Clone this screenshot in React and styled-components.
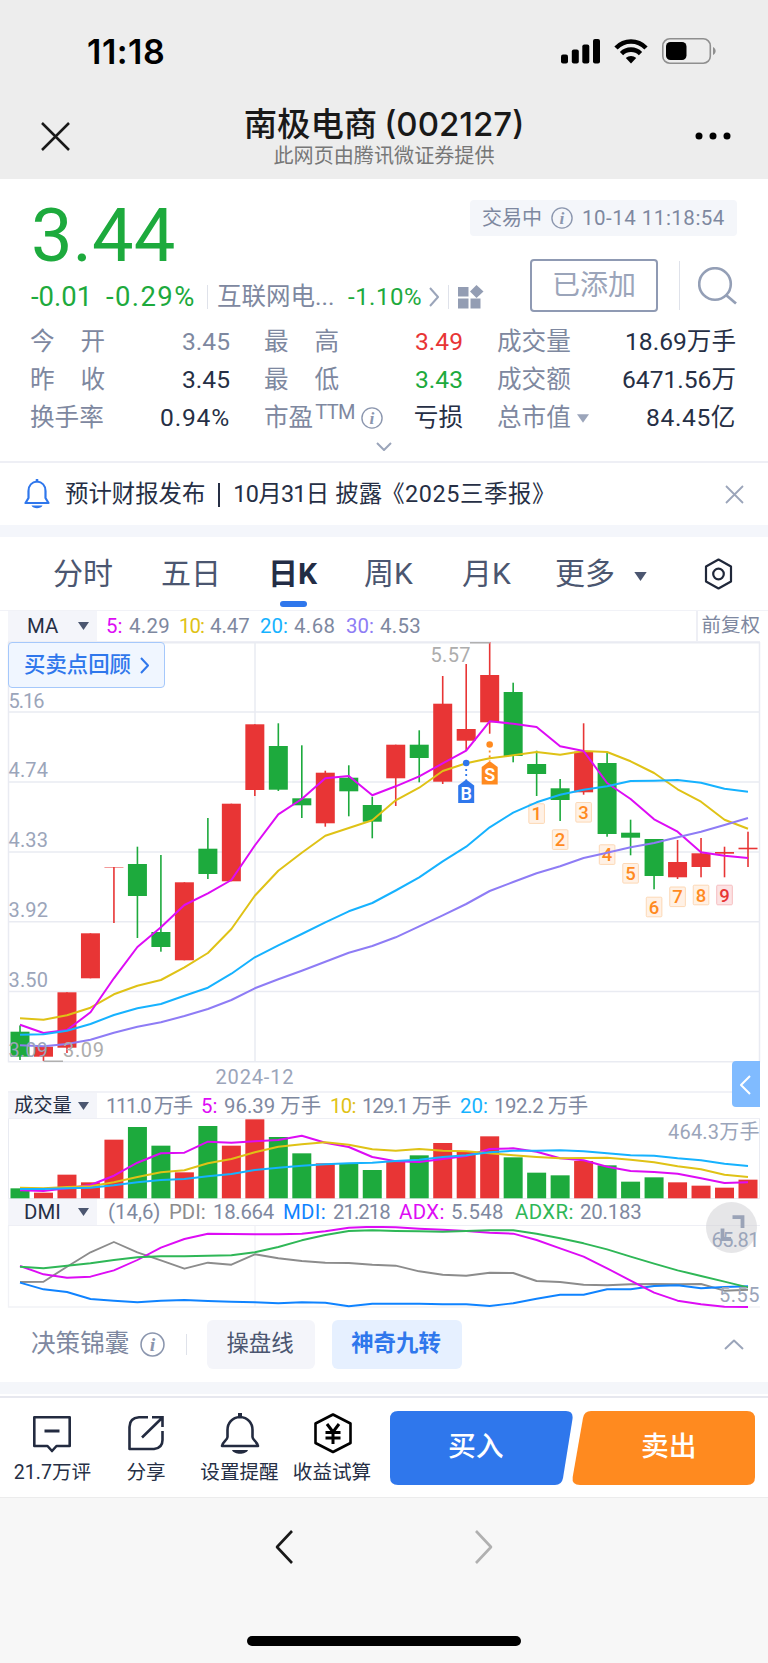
import React from 'react'
import styled, { createGlobalStyle } from 'styled-components'


const GlobalStyle = createGlobalStyle`
    * {
        box-sizing: border-box;
    }

    body {
        margin: 0;
        background: #f7f7f7;
        font-family: Roboto, "Noto Sans CJK SC", sans-serif;
        color: #262f45;
    }

    svg {
        display: block;
        flex: none;
    }
`

const RED = '#e83535'
const GREEN = '#1daa3d'
const GREY = '#7e88a0'
const PALE = '#9ba5ba'
const BLUE = '#2f77ec'
const ORANGE = '#ff8a1f'
const MAGENTA = '#dd0cf5'
const YELLOW = '#dfc216'
const CYAN = '#16b2ff'
const PURPLE = '#8e7cf5'

const Page = styled.div`
    width: 768px;
    height: 1663px;
    overflow: hidden;
    background: #fff;
`

/* ---------- header ---------- */

const Header = styled.header`
    height: 179px;
    background: #ededed;
    color: #000;
`

const StatusBar = styled.div`
    height: 102px;
    padding: 0 52px 0 87px;
    display: flex;
    align-items: center;
`

const Clock = styled.div`
    flex: 1;
    padding-top: 1px;
    font: 600 34px/40px Inter, sans-serif;
    letter-spacing: 0.5px;
`

const StatusIcons = styled.div`
    display: flex;
    align-items: center;
    gap: 14px;
`

const TitleBar = styled.div`
    height: 77px;
    padding: 0 37px 0 41px;
    display: flex;
    justify-content: space-between;
`

const TitleIcon = styled.div`
    width: 36px;
    padding-top: ${(p) => p.$top}px;
`

const TitleText = styled.div`
    text-align: center;
    padding-right: 4px;
`

const StockName = styled.h1`
    margin: 0;
    height: 42px;
    font: 500 33.4px/45px Inter, "Noto Sans CJK SC", sans-serif;
    color: #191919;
    white-space: nowrap;

    span {
        margin-left: 7px;
        font-size: 33px;
        letter-spacing: 0px;
    }
`

const Provider = styled.div`
    font-size: 20.1px;
    line-height: 24px;
    color: #777;
`

/* ---------- quote ---------- */

const Quote = styled.section`
    height: 284px;
    padding: 21px 31px 0;
    border-bottom: 2px solid #eeeff5;
`

const QuoteTop = styled.div`
    height: 115px;
    display: flex;
    justify-content: space-between;
`

const QuoteMain = styled.div`
    flex: none;
    width: 430px;
`

const Price = styled.div`
    height: 79px;
    font-size: 74px;
    line-height: 72px;
    color: ${GREEN};
`

const ChangeRow = styled.div`
    height: 34px;
    padding-top: 1px;
    display: flex;
    align-items: center;
    white-space: nowrap;
`

const Change = styled.span`
    flex: none;
    width: ${(p) => p.$w}px;
    font-size: ${(p) => p.$size || 26}px;
    letter-spacing: ${(p) => p.$track || 0}px;
    color: ${GREEN};
`

const Sector = styled.span`
    flex: none;
    width: 131px;
    font-size: 24.5px;
    line-height: 30px;
    color: ${GREY};
`

const Divider = styled.i`
    flex: none;
    width: 1px;
    height: ${(p) => p.$h || 24}px;
    margin: 0 ${(p) => p.$right || 9}px 0 ${(p) => p.$left || 0}px;
    background: #dfe2ea;
`

const QuoteSide = styled.div`
    display: flex;
    flex-direction: column;
    align-items: flex-end;
    gap: 23px;
`

const StatusPill = styled.div`
    width: 267px;
    height: 36px;
    padding: 0 12px;
    display: flex;
    align-items: center;
    gap: 9px;
    border-radius: 4px;
    background: #f4f6fa;
    color: ${GREY};
    font-size: 20px;
    line-height: 34px;
    white-space: nowrap;

    span {
        font-size: 20.5px;
        letter-spacing: 0.5px;
    }
`

const SideActions = styled.div`
    display: flex;
    align-items: center;
`

const AddedButton = styled.button`
    width: 128px;
    height: 53px;
    padding: 0;
    border: 2px solid #8f9ab3;
    border-radius: 4px;
    background: #fff;
    color: ${PALE};
    font: 28px/40px Roboto, "Noto Sans CJK SC", sans-serif;
`

const Stats = styled.div`
    padding-top: 8px;
    display: grid;
    grid-template-columns: 199px 198px 238px;
    grid-auto-rows: 38.2px;
    column-gap: 35px;
`

const Stat = styled.div`
    display: flex;
    align-items: center;
    justify-content: space-between;
    white-space: nowrap;
`

const StatLabel = styled.span`
    display: flex;
    align-items: center;
    margin-left: -1px;
    font-size: 24.6px;
    line-height: 30px;
    color: ${GREY};

    sup {
        font-size: 20px;
        line-height: 20px;
        margin: -12px 6px 0 2px;
        letter-spacing: -0.6px;
    }
`

const Spread = styled.span`
    width: 75px;
    display: flex;
    justify-content: space-between;
`

const StatValue = styled.span`
    font-size: 24.6px;
    line-height: 30px;
    letter-spacing: ${(p) => p.$track || 0}px;
    color: ${(p) => p.$color || '#262f45'};
`

const MoreStats = styled.div`
    padding-top: 4px;
    display: flex;
    justify-content: center;
`

/* ---------- notice ---------- */

const Notice = styled.section`
    height: 74px;
    padding: 0 24px 0 24px;
    display: flex;
    align-items: center;
    border-bottom: 12px solid #f4f6fb;
    font-size: 23.4px;
    line-height: 30px;
    white-space: nowrap;
`

const NoticeText = styled.div`
    flex: 1;
    display: flex;
    padding-left: 15px;

    b {
        width: 2px;
        height: 24px;
        margin: 4px 13px 0 13px;
        background: #262f45;
    }
`

const NoticeDate = styled.span`
    width: 102px;
    letter-spacing: -0.7px;
`

const NoticeReport = styled.span`
    margin-left: -1px;
    letter-spacing: 0.6px;
`

/* ---------- period tabs ---------- */

const Tabs = styled.nav`
    height: 74px;
    padding: 0 35px 0 53px;
    display: flex;
    border-bottom: 1px solid #f1f2f7;
`

const Tab = styled.div`
    width: ${(p) => p.$w}px;
    font-size: 30px;
    line-height: 74px;
    font-weight: ${(p) => (p.$active ? 700 : 400)};
    color: ${(p) => (p.$active ? '#232d45' : '#4b5670')};
    white-space: nowrap;

    &::after {
        content: '';
        display: ${(p) => (p.$active ? 'block' : 'none')};
        width: 27px;
        height: 6px;
        margin: -10px 0 0 12px;
        border-radius: 3px;
        background: ${BLUE};
    }
`

const TabCaret = styled.div`
    flex: 1;
    padding: 35px 0 0 1px;
`

const TabSetting = styled.div`
    padding-top: 21px;
`

/* ---------- charts ---------- */

const LegendRow = styled.div`
    height: ${(p) => p.$h}px;
    margin: 0 8px;
    display: flex;
    align-items: center;
    border-top: ${(p) => (p.$line ? '2px solid #f1f2f7' : 'none')};
    border-bottom: 1px solid #eeeff5;
    font-size: 20.4px;
    line-height: 24px;
    color: ${GREY};
    white-space: nowrap;
`

const LegendPicker = styled.div`
    align-self: stretch;
    width: 89px;
    padding: 0 8px 0 ${(p) => p.$left}px;
    margin-right: ${(p) => p.$gap}px;
    display: flex;
    align-items: center;
    justify-content: space-between;
    background: #f4f5fa;
    color: #262f45;
    font-size: ${(p) => p.$size || 20.4}px;
`

const LegendItem = styled.span`
    width: ${(p) => p.$w}px;
    letter-spacing: ${(p) => p.$track || 0}px;
    color: ${(p) => p.$color || GREY};
`

const Adjust = styled.div`
    align-self: stretch;
    margin-left: auto;
    padding-left: 3px;
    display: flex;
    align-items: center;
    border-left: 2px solid #eeeff5;
    font-size: 19.5px;
`

const ChartArea = styled.div`
    position: relative;
`

const ReviewButton = styled.button`
    position: absolute;
    left: 8px;
    top: 0;
    width: 157px;
    height: 46px;
    padding: 0 15px 0 15px;
    display: flex;
    align-items: center;
    justify-content: space-between;
    border: 1px solid #a5c8fb;
    border-radius: 4px;
    background: #f0f6ff;
    color: ${BLUE};
    font: 500 21.4px/30px Roboto, "Noto Sans CJK SC", sans-serif;
`

const SideHandle = styled.div`
    position: absolute;
    right: 8px;
    top: 419px;
    z-index: 2;
    width: 28px;
    height: 46px;
    padding: 14px 0 0 8px;
    border-radius: 4px 0 0 4px;
    background: #80bbff;
`

const FullscreenButton = styled.div`
    position: absolute;
    right: 11px;
    top: -24px;
    width: 51px;
    height: 51px;
    border-radius: 50%;
    background: rgba(205, 205, 210, 0.5);
`

const DmiScale = styled.svg`
    position: absolute;
    left: 0;
    top: 0;
`

/* ---------- strategy row ---------- */

const Strategy = styled.section`
    height: 86px;
    padding: 0 24px 1px 31px;
    display: flex;
    align-items: center;
    border-bottom: 12px solid #f4f6fa;
    white-space: nowrap;
`

const StrategyLabel = styled.span`
    width: 109px;
    font-size: 24.6px;
    line-height: 30px;
    padding-bottom: 2px;
    color: ${GREY};
`

const Chip = styled.div`
    width: ${(p) => p.$w}px;
    height: 49px;
    margin-right: 17px;
    border-radius: 6px;
    padding-right: 2px;
    text-align: center;
    font-size: 22.4px;
    line-height: 46px;
    font-weight: ${(p) => (p.$active ? 700 : 400)};
    color: ${(p) => (p.$active ? BLUE : '#4b5670')};
    background: ${(p) => (p.$active ? '#e6f0ff' : '#f4f5fa')};
`

const Grow = styled.div`
    flex: 1;
`

/* ---------- bottom bar ---------- */

const ActionBar = styled.footer`
    height: 102px;
    margin-top: 2px;
    padding: 13px 13px 0 7px;
    display: flex;
    border-top: 2px solid #e7e8ef;
    border-bottom: 1px solid #ececec;
`

const Action = styled.div`
    width: ${(p) => p.$w}px;
    display: flex;
    flex-direction: column;
    align-items: center;
    gap: 5px;
    font-size: 19.6px;
    line-height: 26px;
    white-space: nowrap;
`

const TradeButtons = styled.div`
    width: 365px;
    height: 74px;
    margin-left: auto;
    display: grid;
    grid-template: 74px / 178px 187px;
`

const TradeShape = styled.svg`
    grid-area: 1 / 1 / 2 / 3;
`

const TradeLabel = styled.span`
    grid-row: 1;
    grid-column: ${(p) => p.$col};
    z-index: 1;
    padding-left: ${(p) => p.$left}px;
    font-size: 27.8px;
    line-height: 72px;
    font-weight: 500;
    color: #fff;
`

const BrowserNav = styled.div`
    height: 166px;
    padding-top: 32px;
    display: flex;
    flex-direction: column;
    align-items: center;
    justify-content: space-between;
    background: #f7f7f7;
`

const NavButtons = styled.div`
    display: flex;
    gap: 180px;
`

const HomeBar = styled.div`
    width: 274px;
    height: 10px;
    margin-bottom: 18px;
    border-radius: 5px;
    background: #000;
`

/* ---------- data ---------- */

// color, body top, body bottom, high, low
const candles = [
    ['g', 1031.7, 1056.7, 1025.5, 1060],
    ['r', 1046.7, 1056.7, 1046, 1061],
    ['r', 992.3, 1047.7, 992.3, 1053],
    ['r', 933.3, 978.3, 933.3, 978.3],
    ['r', 867, 868, 867, 923],
    ['g', 864, 896, 846.7, 938],
    ['g', 932, 947, 855, 951.7],
    ['r', 882.3, 960.3, 882.3, 960.3],
    ['g', 848.7, 874, 818, 879],
    ['r', 803.7, 881.3, 803.7, 881.3],
    ['r', 724.3, 790, 724.3, 796],
    ['g', 746, 789.7, 723.3, 791],
    ['g', 798.3, 805.3, 745.3, 818],
    ['r', 772.7, 823.3, 770.7, 826.7],
    ['g', 777.7, 791.3, 765.3, 816.3],
    ['g', 805, 821.7, 796.7, 838.3],
    ['r', 744.7, 778.3, 744.7, 806],
    ['g', 744.7, 758, 730.3, 782.3],
    ['r', 703.7, 781.7, 676, 784],
    ['r', 729, 740.7, 664, 750.7],
    ['r', 675, 722.3, 642, 733.7],
    ['g', 692, 756, 682.7, 762.3],
    ['g', 764, 774, 750.7, 796],
    ['g', 788.3, 800, 779, 821],
    ['r', 751.7, 792.3, 723.3, 794.7],
    ['g', 763, 834, 753, 836.7],
    ['g', 832.7, 837.7, 819.7, 855.3],
    ['g', 839, 876, 839, 889.3],
    ['r', 862, 877.3, 840, 879],
    ['r', 853.3, 867, 838, 877.3],
    ['r', 852, 853.7, 846.7, 877.3],
    ['r', 847.7, 849.3, 831.7, 867],
]

const ma = [
    { color: YELLOW, points: [1018.3, 1019.7, 1015.3, 1007.7, 994.3, 985.7, 980, 967.3, 953, 929, 895.7, 870.7, 852.7, 835.7, 828, 820.3, 800.3, 787.7, 771, 763.3, 758.3, 755.3, 752, 754.7, 751, 752, 761.3, 773, 789.3, 801.7, 819.7, 828.7] },
    { color: MAGENTA, points: [1024.7, 1033, 1030, 1012.3, 978.3, 947, 927.3, 905, 893.3, 880, 845.5, 814.3, 799, 778.3, 776, 795.3, 786.3, 776.3, 763.3, 750.7, 721.3, 723.7, 727, 746.3, 751, 783, 799, 819.3, 831.7, 852.3, 855.7, 858] },
    { color: CYAN, points: [1034.7, 1034.3, 1030.7, 1024, 1015, 1008.3, 1004, 995.7, 987.7, 973.7, 957.3, 945.3, 934, 922.3, 911.3, 903, 890.5, 877.3, 861.3, 846.7, 827.3, 812.7, 802.3, 794.7, 789.7, 786.3, 781, 780.7, 780, 782.7, 788.7, 791.7] },
    { color: PURPLE, points: [1045.3, 1046.3, 1044, 1039.7, 1032.7, 1026.7, 1022.3, 1016, 1009, 1000, 988.3, 979.3, 970.7, 961.7, 952.7, 946, 937.3, 926.3, 915.3, 904, 891, 882, 873.3, 866.3, 858, 852.7, 847.3, 843, 837.3, 831.7, 825, 818] },
]

const volumes = [325, 338, 284, 307, 179, 141, 197, 277, 138, 197, 118, 171, 220, 250, 252, 270, 246, 226, 189, 216, 169, 232, 278, 286, 243, 256, 305, 292, 307, 317, 323, 299]

const volumeMa = [
    { color: MAGENTA, points: [331, 333, 325, 315, 287, 248, 220, 218, 185, 188, 184, 180, 167, 188, 201, 231, 244, 246, 237, 228, 207, 205, 215, 235, 241, 260, 273, 276, 281, 295, 309, 307] },
    { color: YELLOW, points: [323, 325, 321, 319, 307, 291, 277, 271, 250, 237, 217, 200, 193, 187, 194, 208, 212, 207, 212, 214, 220, 226, 231, 235, 234, 233, 239, 247, 259, 268, 284, 291] },
    { color: CYAN, points: [327, 327, 325, 323, 316, 307, 300, 297, 289, 282, 270, 263, 257, 253, 250, 248, 243, 239, 231, 226, 217, 212, 212, 211, 214, 220, 226, 227, 235, 241, 251, 258] },
]

const dmi = [
    { color: '#8c8c8c', points: [606, 605, 560, 517, 486, 517, 541, 566, 548, 554, 523, 535, 543, 548, 549, 554, 557, 574, 584, 587, 578, 579, 603, 606, 614, 616, 613, 612, 613, 612, 632, 629] },
    { color: '#0f83ff', points: [608, 628, 636, 657, 662, 667, 662, 660, 663, 665, 667, 670, 667, 668, 679, 671, 671, 671, 673, 673, 678, 670, 656, 644, 644, 628, 628, 618, 616, 625, 621, 619] },
    { color: MAGENTA, points: [558, 583, 593, 590, 571, 540, 503, 477, 461, 462, 463, 463, 461, 454, 443, 440, 442, 446, 449, 453, 458, 461, 480, 505, 530, 565, 602, 638, 662, 673, 680, 681] },
    { color: '#2fb757', points: [560, 565, 557, 550, 540, 532, 529, 529, 527, 526, 517, 501, 481, 465, 453, 451, 453, 454, 455, 453, 451, 451, 461, 475, 490, 508, 530, 551, 571, 588, 605, 622] },
]

const priceLabels = ['5.16', '4.74', '4.33', '3.92', '3.50', '3.09']

// nine-turn counters: index of the candle they start from is 22
const turns = [803.3, 829.3, 802, 844.3, 863, 896.7, 886.5, 884.7, 884.7]

const tabs = [
    { label: '分时', w: 108 },
    { label: '五日', w: 107 },
    { label: '日K', w: 96, active: true },
    { label: '周K', w: 98 },
    { label: '月K', w: 93 },
    { label: '更多', w: 78 },
]

const xAt = (i) => 20 + i * 23.484
const toLine = (points, fn) => points.map((v, i) => `${xAt(i).toFixed(1)},${fn(v).toFixed(1)}`).join(' ')
const colorOf = (c) => (c === 'r' ? RED : GREEN)

/* ---------- small icons ---------- */

const InfoIcon = ({ size = 23 }) => (
    <svg width={size} height={size} viewBox='0 0 24 24'>
        <circle cx='12' cy='12' r='11' fill='none' stroke='#8b96ae' strokeWidth='1.5' />
        <text x='12' y='18' textAnchor='middle' fontFamily='Liberation Serif, serif' fontStyle='italic' fontWeight='700' fontSize='19' fill='#8b96ae'>i</text>
    </svg>
)

const Caret = ({ w = 11, h = 8, color = '#4b5670' }) => (
    <svg width={w} height={h} viewBox='0 0 11 8'>
        <path d='M0 0H11L5.5 8Z' fill={color} />
    </svg>
)

const Chevron = ({ w, h, d, color, stroke = 2 }) => (
    <svg width={w} height={h} viewBox={`0 0 ${w} ${h}`}>
        <path d={d} fill='none' stroke={color} strokeWidth={stroke} strokeLinejoin='round' />
    </svg>
)


const TopHeader = () => (
    <Header>
        <StatusBar>
            <Clock>11:18</Clock>
            <StatusIcons>
                <svg width='39' height='25' viewBox='0 0 39 25'>
                    <rect x='0' y='15.5' width='7' height='9' rx='2' />
                    <rect x='10.8' y='10.5' width='7' height='14' rx='2' />
                    <rect x='21.3' y='5.5' width='7' height='19' rx='2' />
                    <rect x='32' y='0' width='7' height='24.5' rx='2' />
                </svg>
                <svg width='34' height='25' viewBox='0 0 34 25'>
                    <g fill='none' stroke='#000' strokeWidth='4.6'>
                        <path d='M2 9C10.5 .4 23.5 .4 32 9' />
                        <path d='M7.5 14.6C12.8 9.3 21.2 9.3 26.5 14.6' />
                    </g>
                    <path d='M17 24.5L11.8 19C14.7 16.3 19.3 16.3 22.2 19Z' />
                </svg>
                <svg width='54' height='26' viewBox='0 0 54 26'>
                    <rect x='.8' y='.8' width='47.5' height='24.4' rx='7' fill='none' stroke='#8f8f8f' strokeWidth='1.6' />
                    <rect x='4' y='4' width='20.5' height='18' rx='4.5' />
                    <path d='M51 9C54.5 10.5 54.5 15.5 51 17Z' fill='#8f8f8f' />
                </svg>
            </StatusIcons>
        </StatusBar>
        <TitleBar>
            <TitleIcon $top={20}>
                <svg width='29' height='29' viewBox='0 0 29 29'>
                    <path d='M1 1L28 28M28 1L1 28' stroke='#191919' strokeWidth='2.5' />
                </svg>
            </TitleIcon>
            <TitleText>
                <StockName>南极电商<span>(002127)</span></StockName>
                <Provider>此网页由腾讯微证券提供</Provider>
            </TitleText>
            <TitleIcon $top={30}>
                <svg width='36' height='8' viewBox='0 0 36 8'>
                    <circle cx='4' cy='4' r='3.5' />
                    <circle cx='18' cy='4' r='3.5' />
                    <circle cx='32' cy='4' r='3.5' />
                </svg>
            </TitleIcon>
        </TitleBar>
    </Header>
)

const QuotePanel = () => (
    <Quote>
        <QuoteTop>
            <QuoteMain>
                <Price>3.44</Price>
                <ChangeRow>
                    <Change $w={75} $size={27.5} $track={0}>-0.01</Change>
                    <Change $w={101} $size={27.5} $track={1.4}>-0.29%</Change>
                    <Divider />
                    <Sector>互联网电...</Sector>
                    <Change $w={81} $size={24} $track={0.5}>-1.10%</Change>
                    <Chevron w={10} h={20} d='M1 1L9 10L1 19' color={PALE} />
                    <Divider $left={9} $right={9} />
                    <svg width='26' height='24' viewBox='0 0 26 24' fill='#939db3'>
                        <rect x='0' y='2' width='10.5' height='9.5' />
                        <rect x='0' y='13.5' width='10.5' height='10' />
                        <rect x='12.5' y='13.5' width='10' height='10' />
                        <path d='M18.5 0L25.5 6.5L18.5 13L12 6.5Z' />
                    </svg>
                </ChangeRow>
            </QuoteMain>
            <QuoteSide>
                <StatusPill>
                    交易中
                    <InfoIcon size={22} />
                    <span>10-14 11:18:54</span>
                </StatusPill>
                <SideActions>
                    <AddedButton>已添加</AddedButton>
                    <Divider $h={49} $left={21} $right={18} />
                    <svg width='39' height='38' viewBox='0 0 39 38'>
                        <circle cx='17' cy='17' r='15.8' fill='none' stroke='#949fb6' strokeWidth='2.6' />
                        <path d='M28 28L38 36.5' stroke='#949fb6' strokeWidth='2.8' />
                    </svg>
                </SideActions>
            </QuoteSide>
        </QuoteTop>
        <Stats>
            <Stat>
                <StatLabel><Spread><span>今</span><span>开</span></Spread></StatLabel>
                <StatValue $color={GREY}>3.45</StatValue>
            </Stat>
            <Stat>
                <StatLabel><Spread><span>最</span><span>高</span></Spread></StatLabel>
                <StatValue $color={RED}>3.49</StatValue>
            </Stat>
            <Stat>
                <StatLabel>成交量</StatLabel>
                <StatValue>18.69万手</StatValue>
            </Stat>
            <Stat>
                <StatLabel><Spread><span>昨</span><span>收</span></Spread></StatLabel>
                <StatValue>3.45</StatValue>
            </Stat>
            <Stat>
                <StatLabel><Spread><span>最</span><span>低</span></Spread></StatLabel>
                <StatValue $color={GREEN}>3.43</StatValue>
            </Stat>
            <Stat>
                <StatLabel>成交额</StatLabel>
                <StatValue>6471.56万</StatValue>
            </Stat>
            <Stat>
                <StatLabel>换手率</StatLabel>
                <StatValue $track={0.8}>0.94%</StatValue>
            </Stat>
            <Stat>
                <StatLabel>市盈<sup>TTM</sup><InfoIcon size={22} /></StatLabel>
                <StatValue>亏损</StatValue>
            </Stat>
            <Stat>
                <StatLabel>总市值&nbsp;<Caret w={12} h={9} color={PALE} /></StatLabel>
                <StatValue $track={0.6}>84.45亿</StatValue>
            </Stat>
        </Stats>
        <MoreStats>
            <Chevron w={16} h={9} d='M1 1L8 8L15 1' color={PALE} />
        </MoreStats>
    </Quote>
)

const NoticePanel = () => (
    <Notice>
        <svg width='26' height='30' viewBox='0 0 26 30'>
            <path d='M13 2.5C8 3 4.5 6.5 4.5 12V19L1.5 24H24.5L21.5 19V12C21.5 6.5 18 3 13 2.5Z' fill='none' stroke={BLUE} strokeWidth='2.2' strokeLinejoin='round' />
            <path d='M13 0V3' stroke={BLUE} strokeWidth='2.5' />
            <path d='M7.5 26.5H18.5C17 30 9 30 7.5 26.5Z' fill={BLUE} />
        </svg>
        <NoticeText>
            预计财报发布
            <b />
            <NoticeDate>10月31日</NoticeDate>
            披露
            <NoticeReport>《2025三季报》</NoticeReport>
        </NoticeText>
        <svg width='19' height='19' viewBox='0 0 19 19'>
            <path d='M1 1L18 18M18 1L1 18' stroke={PALE} strokeWidth='1.8' />
        </svg>
    </Notice>
)

const PeriodTabs = () => (
    <Tabs>
        {tabs.map((tab) => (
            <Tab key={tab.label} $w={tab.w} $active={tab.active}>{tab.label}</Tab>
        ))}
        <TabCaret><Caret w={13} h={9} /></TabCaret>
        <TabSetting>
            <svg width='29' height='32' viewBox='0 0 29 32' fill='none' stroke='#20283a' strokeWidth='2.2'>
                <path d='M14.5 1.5L27 8.5V23.5L14.5 30.5L2 23.5V8.5Z' strokeLinejoin='round' />
                <circle cx='14.5' cy='16' r='5.3' />
            </svg>
        </TabSetting>
    </Tabs>
)

const SignalMarker = ({ i, dot, tip, color, label }) => {
    const x = xAt(i)

    return (
        <g>
            <circle cx={x} cy={dot} r='3.3' fill={color} />
            <path d={`M${x} ${dot + 6}V${tip}`} stroke={color} strokeWidth='1.8' strokeDasharray='2 3' />
            <path d={`M${x} ${tip}L${x + 8} ${tip + 6}V${tip + 23.5}H${x - 8}V${tip + 6}Z`} fill={color} />
            <text x={x} y={tip + 20} textAnchor='middle' fontSize='18' fontWeight='600' fill='#fff'>{label}</text>
        </g>
    )
}

const CandleChart = () => (
    <svg width='768' height='449' viewBox='0 642 768 449' fontFamily='Roboto, sans-serif'>
        <g stroke='#e9ebf2' strokeWidth='1.5' fill='none'>
            {[712, 782, 852, 921.7, 991.5].map((y) => (
                <path key={y} d={`M8 ${y}H760`} />
            ))}
            <path d='M8.5 642.7H759.5V1061.7H8.5Z' />
            <path d='M255 642V1061' />
        </g>
        {candles.map(([c, top, bottom, high, low], i) => (
            <g key={i} fill={colorOf(c)}>
                <rect x={xAt(i) - 0.8} y={high} width='1.6' height={low - high} />
                <rect x={xAt(i) - 9.5} y={top} width='19' height={bottom - top} opacity={i === 4 ? 0.5 : 1} />
            </g>
        ))}
        {turns.map((y, i) => {
            const last = i === turns.length - 1

            return (
                <g key={i}>
                    <rect x={xAt(22 + i) - 7.8} y={y + 0.5} width='15.6' height='19.6' rx='1' fill={last ? '#fce3e4' : '#fff1e5'} stroke={last ? '#f7bdbf' : '#fdd8b5'} />
                    <text x={xAt(22 + i)} y={y + 16.8} textAnchor='middle' fontSize='18.5' fontWeight='500' fill={last ? RED : ORANGE}>{i + 1}</text>
                </g>
            )
        })}
        {ma.map((line) => (
            <polyline key={line.color} points={toLine(line.points, (v) => v)} fill='none' stroke={line.color} strokeWidth='2' strokeLinejoin='round' />
        ))}
        <SignalMarker i={19} dot={763} tip={779.5} color={BLUE} label='B' />
        <SignalMarker i={20} dot={744.5} tip={761} color={ORANGE} label='S' />
        <path d='M470 642.7H490M43.5 1061.3H63' stroke='#b0b0b0' strokeWidth='1.6' />
        <g fontSize='20' fill='#adadad'>
            <text x='430.5' y='661.5' textLength='40'>5.57</text>
            <text x='63' y='1056.7' textLength='41'>3.09</text>
        </g>
        <g fontSize='20' fill={PALE}>
            {priceLabels.map((label, i) => (
                <text key={label} x='8.5' y={707.5 + i * 69.9} textLength={i ? 39.5 : 36}>{label}</text>
            ))}
            <text x='215.5' y='1083.5' textLength='78'>2024-12</text>
        </g>
    </svg>
)

const VolumeChart = () => (
    <svg width='768' height='80' viewBox='0 0 768 80' fontFamily='Roboto, "Noto Sans CJK SC", sans-serif'>
        <path d='M8.5 0V79.5H759.5V0' fill='none' stroke='#e9ebf2' />
        {volumes.map((v, i) => (
            <rect key={i} x={xAt(i) - 9.5} y={v / 3 - 39} width='19' height={79.3 - (v / 3 - 39)} fill={colorOf(candles[i][0])} />
        ))}
        {volumeMa.map((line) => (
            <polyline key={line.color} points={toLine(line.points, (v) => v / 3 - 39)} fill='none' stroke={line.color} strokeWidth='2' strokeLinejoin='round' />
        ))}
        <text x='668' y='20' fontSize='20' textLength='91.5' fill={PALE}>464.3万手</text>
    </svg>
)

const DmiChart = () => (
    <svg width='768' height='82' viewBox='0 0 768 82' fontFamily='Roboto, sans-serif'>
        <path d='M8.5 0V81H760M255 0V81' fill='none' stroke='#f1f2f6' strokeWidth='1.3' />
        {dmi.map((line) => (
            <polyline key={line.color} points={toLine(line.points, (v) => v / 3 - 146)} fill='none' stroke={line.color} strokeWidth='1.9' strokeLinejoin='round' />
        ))}
    </svg>
)

const Charts = () => (
    <section>
        <LegendRow $h={31}>
            <LegendPicker $left={19} $gap={9}>MA<Caret /></LegendPicker>
            <LegendItem $w={23} $color={MAGENTA}>5:</LegendItem>
            <LegendItem $w={50} $track={0.3}>4.29</LegendItem>
            <LegendItem $w={31} $color={YELLOW} $track={-0.9}>10:</LegendItem>
            <LegendItem $w={50}>4.47</LegendItem>
            <LegendItem $w={34} $color={CYAN}>20:</LegendItem>
            <LegendItem $w={52} $track={0.4}>4.68</LegendItem>
            <LegendItem $w={34} $color={PURPLE}>30:</LegendItem>
            <LegendItem $w={50} $track={0.3}>4.53</LegendItem>
            <Adjust>前复权</Adjust>
        </LegendRow>
        <ChartArea>
            <CandleChart />
            <ReviewButton>
                买卖点回顾
                <Chevron w={9} h={17} d='M1 1L8 8.5L1 16' color={BLUE} />
            </ReviewButton>
            <SideHandle>
                <Chevron w={11} h={20} d='M10 1L1 10L10 19' color='#fff' />
            </SideHandle>
        </ChartArea>
        <LegendRow $h={28} $line>
            <LegendPicker $left={6} $gap={9} $size={19.3}>成交量<Caret /></LegendPicker>
            <LegendItem $w={95} $track={-1.4}>111.0 万手</LegendItem>
            <LegendItem $w={23} $color={MAGENTA}>5:</LegendItem>
            <LegendItem $w={106}>96.39 万手</LegendItem>
            <LegendItem $w={32} $color={YELLOW} $track={-0.7}>10:</LegendItem>
            <LegendItem $w={98} $track={-1.1}>129.1 万手</LegendItem>
            <LegendItem $w={34} $color={CYAN}>20:</LegendItem>
            <LegendItem $w={98} $track={-0.4}>192.2 万手</LegendItem>
        </LegendRow>
        <VolumeChart />
        <LegendRow $h={27}>
            <LegendPicker $left={16} $gap={11}>DMI<Caret /></LegendPicker>
            <LegendItem $w={61}>(14,6)</LegendItem>
            <LegendItem $w={44} $color='#8c8c8c'>PDI:</LegendItem>
            <LegendItem $w={70} $track={-0.3}>18.664</LegendItem>
            <LegendItem $w={50} $color='#0f83ff' $track={0.3}>MDI:</LegendItem>
            <LegendItem $w={66} $track={-1}>21.218</LegendItem>
            <LegendItem $w={52} $color={MAGENTA} $track={0.4}>ADX:</LegendItem>
            <LegendItem $w={64} $track={0.3}>5.548</LegendItem>
            <LegendItem $w={65} $color='#2fb757' $track={0.4}>ADXR:</LegendItem>
            <LegendItem $w={62} $track={-0.2}>20.183</LegendItem>
        </LegendRow>
        <ChartArea>
            <DmiChart />
            <FullscreenButton>
                <svg width='51' height='51' viewBox='0 0 51 51' fill='none' stroke='#9aa3b7' strokeWidth='3.8'>
                    <path d='M26.5 15.2H36.5V26' />
                    <path d='M16.5 26.5V37H25' />
                </svg>
            </FullscreenButton>
            <DmiScale width='768' height='82' viewBox='0 0 768 82' fontFamily='Roboto, sans-serif' fontSize='20' fill={PALE}>
                <text x='711.5' y='20.5' textLength='48'>65.81</text>
                <text x='719' y='76' textLength='40.5'>5.55</text>
            </DmiScale>
        </ChartArea>
    </section>
)

const StrategyPanel = () => (
    <Strategy>
        <StrategyLabel>决策锦囊</StrategyLabel>
        <InfoIcon size={25} />
        <Divider $h={21} $left={21} $right={20} />
        <Chip $w={108}>操盘线</Chip>
        <Chip $w={130} $active>神奇九转</Chip>
        <Grow />
        <Chevron w={20} h={11} d='M1 10L10 1.5L19 10' color={PALE} />
    </Strategy>
)

const BottomBar = () => (
    <ActionBar>
        <Action $w={91}>
            <svg width='40' height='44' viewBox='1 0 40 44' fill='none' stroke='#232b40' strokeWidth='2.6'>
                <path d='M2.3 6.3H37.7V35H24.5L20 40L15.5 35H2.3Z' strokeLinejoin='round' />
                <path d='M12.5 20H27.5' strokeWidth='3' />
            </svg>
            21.7万评
        </Action>
        <Action $w={96}>
            <svg width='40' height='44' viewBox='0 0 40 44' fill='none' stroke='#232b40' strokeWidth='2.6'>
                <path d='M22 6.3H13Q3.5 7 3.5 16V38H28Q36.5 37 36.5 29V20' strokeLinejoin='round' />
                <path d='M26 6.3H36.5V16M36 7L16 26.5' />
            </svg>
            分享
        </Action>
        <Action $w={91}>
            <svg width='40' height='44' viewBox='0 0 40 44'>
                <path d='M20 6C12 6.5 7.5 12 7.5 19V26C7.5 29 2.5 31 2 35H38C37.5 31 32.5 29 32.5 26V19C32.5 12 28 6.5 20 6Z' fill='none' stroke='#232b40' strokeWidth='2.6' strokeLinejoin='round' />
                <path d='M20 2V7' stroke='#232b40' strokeWidth='4' />
                <path d='M12 39H28C26 44 14 44 12 39Z' fill='#232b40' />
            </svg>
            设置提醒
        </Action>
        <Action $w={94}>
            <svg width='40' height='44' viewBox='-1 0 40 44' fill='none' stroke='#000' strokeWidth='2.6'>
                <path d='M20 3.5L37.5 12.5V32L20 41L2.5 32V12.5Z' strokeLinejoin='round' />
                <path d='M14 13L20 21L26 13M12.5 21.5H27.5M12.5 27H27.5M20 21V33' strokeWidth='3' />
            </svg>
            收益试算
        </Action>
        <TradeButtons>
            <TradeShape width='365' height='74' viewBox='0 0 365 74'>
                <path d='M8 0H176Q183.5 0 182.5 8L173 67Q171.8 74 165 74H8Q0 74 0 66V8Q0 0 8 0Z' fill={BLUE} />
                <path d='M201 0H357Q365 0 365 8V66Q365 74 357 74H190Q181.5 74 182.7 66L193 7Q194.3 0 201 0Z' fill={ORANGE} />
            </TradeShape>
            <TradeLabel $col={1} $left={58}>买入</TradeLabel>
            <TradeLabel $col={2} $left={73}>卖出</TradeLabel>
        </TradeButtons>
    </ActionBar>
)


const App = () => {
    return (
        <Page>
            <GlobalStyle />
            <TopHeader />
            <QuotePanel />
            <NoticePanel />
            <PeriodTabs />
            <Charts />
            <StrategyPanel />
            <BottomBar />
            <BrowserNav>
                <NavButtons>
                    <Chevron w={19} h={34} d='M17 1L2 17L17 33' color='#191919' stroke={2.6} />
                    <Chevron w={19} h={34} d='M2 1L17 17L2 33' color='#b0b0b0' stroke={2.6} />
                </NavButtons>
                <HomeBar />
            </BrowserNav>
        </Page>
    )
}

export default App
